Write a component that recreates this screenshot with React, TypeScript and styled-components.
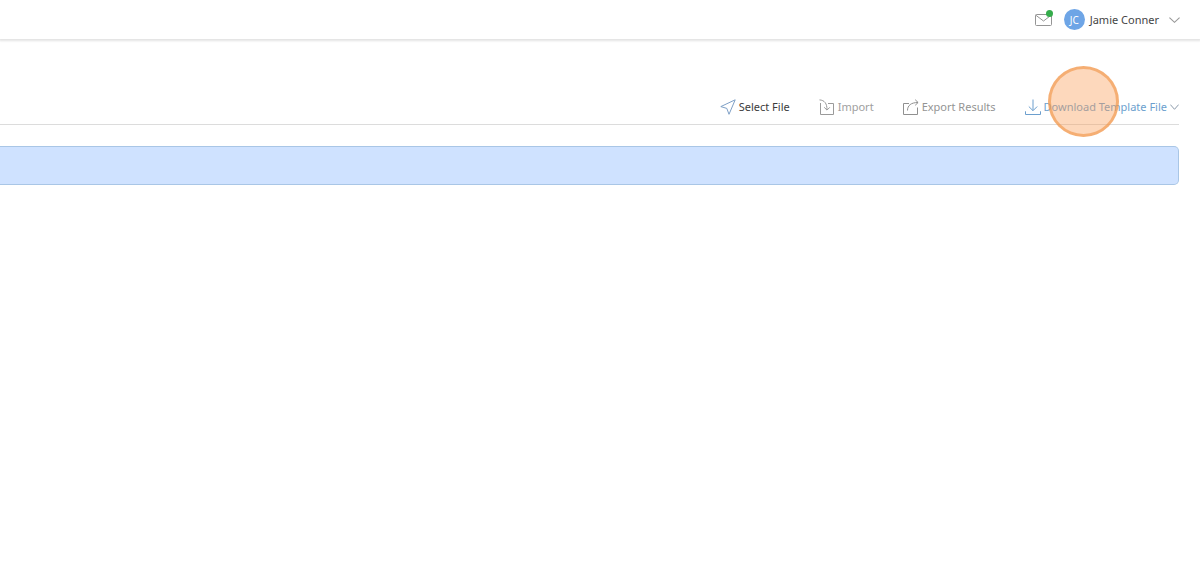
import React from "react";
import styled, { createGlobalStyle } from "styled-components";

const GlobalStyle = createGlobalStyle`
  * { box-sizing: border-box; }
  body {
    margin: 0;
    background: #fff;
    color: #444;
    font-family: "Segoe UI", "Noto Sans", "Open Sans", sans-serif;
    font-size: 11px;
    line-height: 16px;
  }
`;

const Header = styled.header`
  display: flex;
  align-items: center;
  justify-content: flex-end;
  gap: 12px;
  height: 39px;
  padding-right: 20px;
  background: #fff;
  box-shadow: 0 1px 2px 1px #e4e4e4;
`;

const PlainButton = styled.button`
  display: flex;
  align-items: center;
  padding: 0;
  border: 0;
  background: none;
  color: inherit;
  font: inherit;
  white-space: nowrap;
  cursor: pointer;
`;

const MailButton = styled(PlainButton)`
  position: relative;
`;

const UnreadDot = styled.span`
  position: absolute;
  top: -4px;
  right: -1px;
  width: 7px;
  height: 7px;
  border-radius: 50%;
  background: #35ac4b;
`;

const ProfileButton = styled(PlainButton)`
  gap: 10px;
`;

const Person = styled.span`
  display: flex;
  align-items: center;
  gap: 5px;
`;

const Avatar = styled.span`
  display: flex;
  align-items: center;
  justify-content: center;
  width: 21px;
  height: 21px;
  border-radius: 50%;
  background: #6ea5e6;
  color: #fff;
  font-size: 10px;
`;

const Main = styled.main`
  padding: 50px 21px 0 0;
`;

const Toolbar = styled.div`
  display: flex;
  justify-content: flex-end;
  gap: 29px;
  padding: 10px 0 9px;
  border-bottom: 1px solid #dcdcdc;
`;

const ToolButton = styled(PlainButton)<{ $tone: string }>`
  position: relative;
  gap: 3px;
  color: ${(p) => p.$tone};

  &:disabled {
    cursor: default;
  }
`;

const ClickMarker = styled.span`
  position: absolute;
  top: -33px;
  right: 60px;
  width: 71px;
  height: 71px;
  border: 3px solid rgba(240, 146, 67, 0.6);
  border-radius: 50%;
  background: rgba(250, 158, 88, 0.4);
  pointer-events: none;
`;

const Banner = styled.section`
  height: 39px;
  margin-top: 21px;
  border: 1px solid #a9c6e6;
  border-left: 0;
  border-radius: 0 5px 5px 0;
  background: #cfe2ff;
`;

const Icon = styled.svg`
  display: block;
  flex: none;
  fill: none;
  stroke-width: 1;
`;

const Chevron = ({ width, color }: { width: number; color: string }) => (
  <Icon width={width} height="6" viewBox="0 0 10 6" preserveAspectRatio="none" stroke={color} aria-hidden="true">
    <path d="M.4.6 5 5.3 9.6.6" />
  </Icon>
);

const MailIcon = () => (
  <Icon width="17" height="12" viewBox="0 0 17 12" stroke="#959595" aria-hidden="true">
    <rect x=".5" y=".5" width="16" height="11" rx="1" />
    <path d="M.8 1.2 8.5 7l7.7-5.8" />
  </Icon>
);

const PlaneIcon = () => (
  <Icon width="16" height="16" viewBox="0 0 16 16" stroke="#7d9fc6" strokeLinejoin="round" aria-hidden="true">
    <path d="M15.200.8.8 7.600l6 1.800 2.200 5.900z" />
  </Icon>
);

const ImportIcon = () => (
  <Icon width="16" height="16" viewBox="0 0 16 16" stroke="#9a9a9a" aria-hidden="true">
    <path d="M1.500 4v11.500h13v-11h-5.500" />
    <path d="M.5.9c5 .3 7.500 3.500 7.500 9.900M5.200 8.300 8 11.100l2.800-2.800" />
  </Icon>
);

const ExportIcon = () => (
  <Icon width="16" height="16" viewBox="0 0 16 16" stroke="#909090" aria-hidden="true">
    <path d="M6 4.500H.5v11h14V8.500" />
    <path d="M4.500 11.500C4.500 6.500 8 3.500 15 3.500M12.200.7 15.100 3.500l-2.900 2.800" />
  </Icon>
);

const DownloadIcon = () => (
  <Icon width="16" height="16" viewBox="0 0 16 16" stroke="#6c9fce" aria-hidden="true">
    <path d="M8 .5v11M3.800 7.500 8 11.700l4.200-4.200M.5 12.300v3.200h15v-3.200" />
  </Icon>
);

export default function App() {
  return (
    <>
      <GlobalStyle />
      <Header>
        <MailButton type="button" aria-label="Messages">
          <MailIcon />
          <UnreadDot />
        </MailButton>
        <ProfileButton type="button">
          <Person>
            <Avatar>JC</Avatar>
            Jamie Conner
          </Person>
          <Chevron width={11} color="#999" />
        </ProfileButton>
      </Header>
      <Main>
        <Toolbar>
          <ToolButton type="button" $tone="#3c3c3c">
            <PlaneIcon />
            Select File
          </ToolButton>
          <ToolButton type="button" $tone="#a0a0a0" disabled>
            <ImportIcon />
            Import
          </ToolButton>
          <ToolButton type="button" $tone="#949494" disabled>
            <ExportIcon />
            Export Results
          </ToolButton>
          <ToolButton type="button" $tone="#6c9fce">
            <DownloadIcon />
            Download Template File
            <Chevron width={9} color="#8797a8" />
            <ClickMarker />
          </ToolButton>
        </Toolbar>
        <Banner />
      </Main>
    </>
  );
}
